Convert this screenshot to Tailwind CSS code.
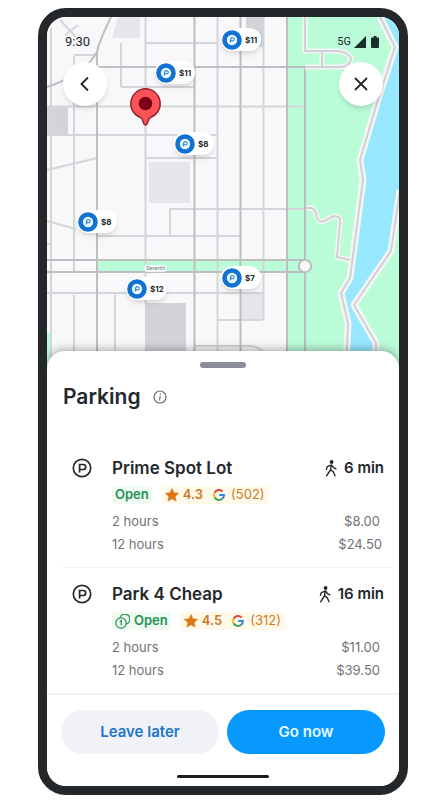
<!DOCTYPE html>
<html lang="en">
<head>
    <meta charset="UTF-8">
    <meta name="viewport" content="width=device-width, initial-scale=1.0">
    <title>Parking</title>
    <script src="https://cdn.jsdelivr.net/npm/@tailwindcss/browser@4"></script>
</head>
<body class="bg-white pl-[38px] pr-[26px] pt-2 pb-[5px] font-['Inter','Liberation_Sans',sans-serif] text-[#24272b]">

    <!-- Shared icons -->
    <svg class="hidden">
        <symbol id="lot" viewBox="0 0 20 20">
            <circle cx="10" cy="10" r="8.7" fill="none" stroke="#24272b" stroke-width="1.7"/>
            <path d="M7.600 14.400V6.500h3.600a2.500 2.500 0 0 1 0 5H7.600" fill="none" stroke="#24272b" stroke-width="1.700"/>
        </symbol>
        <symbol id="spot" viewBox="0 0 20 20">
            <circle cx="10" cy="10" r="9.8" fill="#1272d0"/>
            <circle cx="10" cy="10" r="5.2" fill="#eaf8ff"/>
            <path d="M8.2 12.4l.8-4.6h1.8a1.5 1.5 0 0 1 0 3H8.6" fill="none" stroke="#1272d0" stroke-width="1"/>
        </symbol>
        <symbol id="walk" viewBox="0 0 12 17">
            <circle cx="6.6" cy="2" r="1.9" fill="#24272b"/>
            <path d="M6.3 5L5.4 10L1.6 15.8M5.6 9.6L8.4 12L10 15.8M6 5.2L2.4 6.6L1.4 9.3M6.8 5.2L8.4 7.6L11 8.8" fill="none" stroke="#24272b" stroke-width="1.4" stroke-linecap="round" stroke-linejoin="round"/>
        </symbol>
        <symbol id="star" viewBox="0 0 14 14">
            <path d="M7 .5l1.900 4.300 4.700.5-3.500 3.100 1 4.700L7 10.700l-4.100 2.400 1-4.700L.4 5.300l4.700-.5z" fill="#df7510" stroke="#df7510" stroke-width=".6" stroke-linejoin="round"/>
        </symbol>
        <symbol id="google" viewBox="0 0 12 12">
            <path d="M9.6 2.5A5 5 0 0 0 1.6 3.7" fill="none" stroke="#e2443a" stroke-width="1.9"/>
            <path d="M1.6 3.7a5 5 0 0 0 0 4.6" fill="none" stroke="#f5b921" stroke-width="1.9"/>
            <path d="M1.6 8.3a5 5 0 0 0 7.6 1.5" fill="none" stroke="#34a355" stroke-width="1.9"/>
            <path d="M9.2 9.8A5 5 0 0 0 11 6H6.2" fill="none" stroke="#3f7fe8" stroke-width="1.9"/>
        </symbol>
    </svg>

    <main class="overflow-hidden rounded-[28px] border-[9px] border-[#25282a] bg-white">

        <!-- Map -->
        <section class="relative h-[352px] bg-[#f8f8fa]" aria-label="Map">
            <svg class="h-full w-full" viewBox="47 17 352 352" preserveAspectRatio="xMidYMid slice" fill="none">
                <path d="M287 17H399V369H287zM97 260H305V272H97zM47 333H51V369H47z" fill="#bbfcd8"/>
                <path d="M118 17H140V38H112zM149 162H190V203H149zM241 294H263V320H241z" fill="#e5e6ea"/>
                <path d="M246 17H263V47H246zM47 123H68V135H47zM47 106H68V135H47zM145 303H186V369H145z" fill="#d3d4d8"/>
                <path d="M382 17L395 47L377 103L360 160L363 180L350 278L341 293L348 323L346 369H376V343L354 305L391 251L399 190V17z" fill="#97e7ff"/>
                <!-- Minor streets -->
                <g stroke="#d3d5d8" stroke-width="2">
                    <path d="M51 28V369M74 56V271M121 43V87M145.500 17V303M217.500 17V369M263.500 17V320M74 295V369M115 295V369M170 236V209H305"/>
                    <path d="M145 43H217M74 55H97M121 87H194M47 106.500H303M47 135H217M145 158H217M97 236H240M47 293H263M217 320H263M194 346H250Q258 346 263 352"/>
                    <path d="M47 170L97 158M47 221L76 229M47 244H51M60 20L76 37M65 35L78 25"/>
                </g>
                <!-- Main streets -->
                <g stroke="#bcbfc2" stroke-width="2">
                    <path d="M97 369V52Q98 44 111 17M47 87Q86 74 98 50M194.500 17V369M240.500 17V369M287 17V369M97 67H305M47 260H305M47 272H305M305 67V369"/>
                </g>
                <!-- Park paths -->
                <g stroke="#f4f5f6" stroke-width="7" stroke-linejoin="round">
                    <path d="M380 17L395 47L377 103L360 160L363 180L350 278L341 293L348 323L346 369M400 190L391 251L354 305L376 343V369"/>
                </g>
                <g stroke="#f4f5f6" stroke-width="5" stroke-linejoin="round">
                    <path d="M306 208H311Q316 209 317 218Q320 224 326 220L334 216Q341 216 340 222L337 257L350 260M305 17V51H338Q351 53 351 60Q349 67 338 67H305M322 51V67"/>
                </g>
                <g stroke="#cfd1d4" stroke-width="2" stroke-linejoin="round">
                    <path d="M380 17L395 47L377 103L360 160L363 180L350 278L341 293L348 323L346 369M400 190L391 251L354 305L376 343V369"/>
                    <path d="M306 208H311Q316 209 317 218Q320 224 326 220L334 216Q341 216 340 222L337 257L350 260M305 17V51H338Q351 53 351 60Q349 67 338 67H305M322 51V67"/>
                </g>
                <circle cx="305" cy="266" r="6.200" fill="#f8f8fa" stroke="#b9bcbf" stroke-width="2"/>
                <!-- Destination -->
                <path d="M145.500 88.800A14.800 14.800 0 0 1 151 117.300Q148.600 118.300 148 121.500Q147 125 145.500 125Q144 125 143 121.500Q142.400 118.300 140 117.300A14.800 14.800 0 0 1 145.500 88.800z" fill="#fb5357" stroke="#93262d" stroke-width="1.500"/>
                <circle cx="145.500" cy="103.500" r="6.800" fill="#7d0019"/>
            </svg>

            <span class="absolute top-[248px] left-[97px] rounded-full bg-white/80 px-0.5 text-[5px] leading-[7px] text-gray-500">Seventh</span>

            <!-- Price pins -->
            <button class="absolute top-[11px] left-[174px] flex h-[23px] w-10 items-center gap-[3px] rounded-full bg-white pl-px text-[8px] font-bold shadow-md"><svg class="size-5 shrink-0"><use href="#spot"/></svg>$11</button>
            <button class="absolute top-11 left-[108px] flex h-[23px] w-10 items-center gap-[3px] rounded-full bg-white pl-px text-[8px] font-bold shadow-md"><svg class="size-5 shrink-0"><use href="#spot"/></svg>$11</button>
            <button class="absolute top-[115px] left-[127px] flex h-[23px] w-10 items-center gap-[3px] rounded-full bg-white pl-px text-[8px] font-bold shadow-md"><svg class="size-5 shrink-0"><use href="#spot"/></svg>$8</button>
            <button class="absolute top-[193px] left-[30px] flex h-[23px] w-10 items-center gap-[3px] rounded-full bg-white pl-px text-[8px] font-bold shadow-md"><svg class="size-5 shrink-0"><use href="#spot"/></svg>$8</button>
            <button class="absolute top-[260px] left-[79px] flex h-[23px] w-[41px] items-center gap-[3px] rounded-full bg-white pl-px text-[8px] font-bold shadow-md"><svg class="size-5 shrink-0"><use href="#spot"/></svg>$12</button>
            <button class="absolute top-[249px] left-[174px] flex h-[23px] w-10 items-center gap-[3px] rounded-full bg-white pl-px text-[8px] font-bold shadow-md"><svg class="size-5 shrink-0"><use href="#spot"/></svg>$7</button>

            <!-- Status bar and map controls -->
            <div class="absolute inset-x-0 top-0 px-4 pt-[17px]">
                <div class="flex items-center justify-between pr-1 pl-0.5 leading-4">
                    <span class="font-[Roboto,sans-serif] text-[13px]">9:30</span>
                    <span class="flex items-center gap-[3px] font-[Roboto,sans-serif] text-[11px]">5G
                        <svg class="h-3 w-3" viewBox="0 0 12 12"><path d="M12 0V12H0z" fill="#182e27"/></svg>
                        <svg class="ml-0.5 h-3 w-2" viewBox="0 0 8 12"><path d="M2.500 0h3v1.500H7q1 0 1 1V11q0 1-1 1H1q-1 0-1-1V2.500q0-1 1-1h1.500z" fill="#182e27"/></svg>
                    </span>
                </div>
                <div class="mt-3 flex justify-between">
                    <button class="flex size-11 items-center justify-center rounded-full bg-white shadow-md" aria-label="Back">
                        <svg class="size-4" viewBox="0 0 16 16"><path d="M11 1.500L4.500 8L11 14.500" fill="none" stroke="#24272b" stroke-width="1.800"/></svg>
                    </button>
                    <button class="flex size-11 items-center justify-center rounded-full bg-white shadow-md" aria-label="Close">
                        <svg class="size-4" viewBox="0 0 16 16"><path d="M2 2L14 14M14 2L2 14" fill="none" stroke="#24272b" stroke-width="1.800"/></svg>
                    </button>
                </div>
            </div>
        </section>

        <!-- Bottom sheet -->
        <section class="relative -mt-[18px] rounded-t-[18px] bg-white pt-[11px] shadow-[0_-2px_8px_rgba(0,0,0,0.3)]">
            <div class="mx-auto h-[6px] w-[46px] rounded-full bg-[#8b8d99]"></div>
            <header class="mt-[13px] flex items-center gap-3 px-4 leading-8">
                <h1 class="text-[21px] font-semibold">Parking</h1>
                <button aria-label="About parking">
                    <svg class="size-[14px]" viewBox="0 0 14 14" fill="none" stroke="#6d7075" stroke-width="1.200"><circle cx="7" cy="7" r="6"/><path d="M7.200 5.800L6.500 10.500M7.500 3.400L7.300 4.600"/></svg>
                </button>
            </header>

            <ul class="mt-[29px]">
                <li class="mr-[5px] ml-4 border-b border-[#f0f0f2] pt-[14px] pr-[10px] pb-[11px] pl-[49px]">
                    <div class="-ml-10 flex items-center leading-6">
                        <svg class="mr-5 size-5"><use href="#lot"/></svg>
                        <h2 class="text-[17px] font-semibold">Prime Spot Lot</h2>
                        <span class="ml-auto flex items-center gap-[7px] text-[15px] font-semibold"><svg class="h-[17px] w-3"><use href="#walk"/></svg>6 min</span>
                    </div>
                    <div class="mt-1.5 flex h-[18px] items-center gap-[9px] text-[13px]">
                        <span class="flex h-full items-center rounded bg-[#effaf3] px-[3px] font-semibold text-[#259052]">Open</span>
                        <span class="flex h-full items-center gap-1 rounded bg-[#fff9ea] px-1 text-[#cf7a27]"><svg class="size-[14px]"><use href="#star"/></svg><b class="font-semibold">4.3</b><svg class="mr-0.5 ml-1.5 size-3"><use href="#google"/></svg>(502)</span>
                    </div>
                    <dl class="mt-1.5 grid grid-cols-2 text-[13px] leading-[23px] text-[#717275]">
                        <dt>2 hours</dt><dd class="pr-1 text-right">$8.00</dd>
                        <dt>12 hours</dt><dd class="pr-0.5 text-right">$24.50</dd>
                    </dl>
                </li>
                <li class="mr-[5px] ml-4 pt-[14px] pr-[10px] pb-[11px] pl-[49px]">
                    <div class="-ml-10 flex items-center leading-6">
                        <svg class="mr-5 size-5"><use href="#lot"/></svg>
                        <h2 class="text-[17px] font-semibold">Park 4 Cheap</h2>
                        <span class="ml-auto flex items-center gap-[7px] text-[15px] font-semibold"><svg class="h-[17px] w-3"><use href="#walk"/></svg>16 min</span>
                    </div>
                    <div class="mt-1.5 flex h-[18px] items-center gap-[9px] text-[13px]">
                        <span class="flex h-full items-center gap-1 rounded bg-[#effaf3] px-[3px] font-semibold text-[#259052]">
                            <svg class="size-[15px]" viewBox="0 0 15 15" fill="none" stroke="#259052" stroke-width="1.200"><circle cx="6" cy="9" r="5.200"/><path d="M5 3.900A5 5 0 1 1 11 10M4.600 7.800L6.200 6.700V11.500"/></svg>Open</span>
                        <span class="flex h-full items-center gap-1 rounded bg-[#fff9ea] px-1 text-[#cf7a27]"><svg class="size-[14px]"><use href="#star"/></svg><b class="font-semibold">4.5</b><svg class="mr-0.5 ml-1.5 size-3"><use href="#google"/></svg>(312)</span>
                    </div>
                    <dl class="mt-1.5 grid grid-cols-2 text-[13px] leading-[23px] text-[#717275]">
                        <dt>2 hours</dt><dd class="pr-1 text-right">$11.00</dd>
                        <dt>12 hours</dt><dd class="pr-1 text-right">$39.50</dd>
                    </dl>
                </li>
            </ul>

            <footer class="border-t-2 border-[#f1f1f3] px-[14px] pt-[15px] pb-2">
                <div class="flex gap-2 text-[15px] font-semibold">
                    <button class="h-11 flex-1 rounded-full bg-[#f1f2f7] text-[#1d76cb]">Leave later</button>
                    <button class="h-11 flex-1 rounded-full bg-[#0899ff] text-[#e6fbff]">Go now</button>
                </div>
                <div class="mx-auto mt-[21px] h-[3px] w-[92px] rounded-full bg-[#1b1d1f]"></div>
            </footer>
        </section>
    </main>

</body>
</html>
